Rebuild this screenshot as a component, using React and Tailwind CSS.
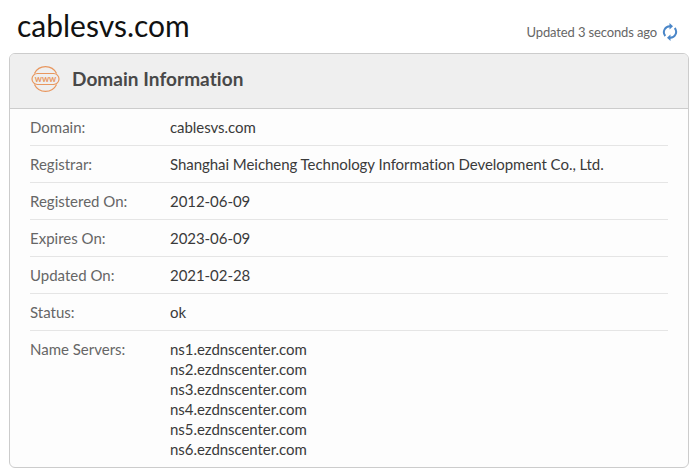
const rows = [
  ["Domain:", ["cablesvs.com"]],
  ["Registrar:", ["Shanghai Meicheng Technology Information Development Co., Ltd."]],
  ["Registered On:", ["2012-06-09"]],
  ["Expires On:", ["2023-06-09"]],
  ["Updated On:", ["2021-02-28"]],
  ["Status:", ["ok"]],
  ["Name Servers:", ["ns1.ezdnscenter.com","ns2.ezdnscenter.com","ns3.ezdnscenter.com","ns4.ezdnscenter.com","ns5.ezdnscenter.com","ns6.ezdnscenter.com"]],
];
export default function App() {
  return (
    <div className="w-[691px] h-[469px] overflow-hidden bg-white text-[#3a3a3a] font-['Lato','Liberation_Sans',sans-serif]">
      <div className="flex items-start justify-between h-[53px] pl-[17px] pr-[13px]">
        <h1 className="text-[30px] leading-[50px] text-[#111]">cablesvs.com</h1>
        <div className="flex items-center gap-[5px] text-[13px] tracking-[-0.13px] text-[#666] mt-[23px] h-[18px]">
          <span className="mt-[1px]">Updated 3 seconds ago</span>
          <svg width="16" height="18" viewBox="0 0 15 18" fill="none" stroke="#4a86c8" strokeWidth="2">
            <path d="M2.8 13A6 6 0 0 1 8 3.2" />
            <path d="M12.2 5A6 6 0 0 1 7 14.8" />
            <path d="M7 0L10.5 3.3L7 6.5" fill="#4a86c8" stroke="none" />
            <path d="M8 11.5L4.5 14.7L8 18" fill="#4a86c8" stroke="none" />
          </svg>
        </div>
      </div>
      <div className="mx-[9px] w-[680px] border border-[#ccc] rounded-[6px] overflow-hidden bg-[#fdfdfd]">
        <div className="flex items-center gap-[12px] h-[55px] pl-[21px] pb-[4px] bg-[#efefef] border-b border-[#ccc]">
          <svg width="29" height="26" viewBox="0 0 29 26" fill="none" stroke="#e8975f" strokeWidth="1.2">
            <path d="M3.4 7.5A12.4 12.4 0 0 1 25.6 7.5" />
            <path d="M3.4 18.5A12.4 12.4 0 0 0 25.6 18.5" />
            <path d="M9 1.5V0M20 1.5V0" stroke="none" />
            <rect x="1" y="7.5" width="27" height="11" rx="5.5" />
            <text x="14.5" y="16" fontSize="9" fontWeight="700" textAnchor="middle" fill="#e8975f" stroke="none">www</text>
          </svg>
          <h2 className="text-[19px] tracking-[0.05px] font-bold text-[#484848]">Domain Information</h2>
        </div>
        <div className="px-[20px]">
          {rows.map(([k, v], i) => (
            <div key={k} className={`flex py-[8px] text-[15px] leading-[20px] ${i < rows.length - 1 ? "border-b border-[#e5e5e5]" : ""}`}>
              <div className="w-[140px] text-[#666]">{k}</div>
              <div className="tracking-[-0.05px]">{v.map(x => <div key={x}>{x}</div>)}</div>
            </div>
          ))}
        </div>
      </div>
    </div>
  );
}
